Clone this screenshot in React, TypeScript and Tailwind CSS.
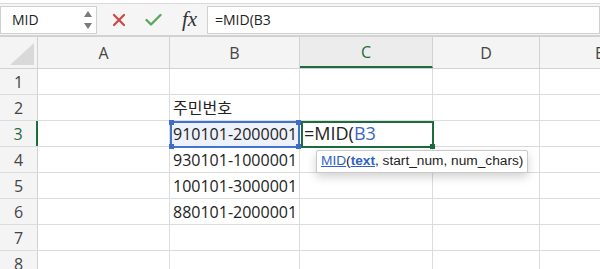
import React from 'react';

const cols = [
  { key: 'A', w: 'w-[132px]' },
  { key: 'B', w: 'w-[130px]' },
  { key: 'C', w: 'w-[133px]' },
  { key: 'D', w: 'w-[107px]' },
  { key: 'E', w: 'w-[120px]' },
];

const data: Record<number, string> = {
  2: '주민번호',
  3: '910101-2000001',
  4: '930101-1000001',
  5: '100101-3000001',
  6: '880101-2000001',
};

function Handle({ className }: { className: string }) {
  return <div className={`absolute w-[5px] h-[5px] bg-[#3f6cc8] ${className}`} />;
}

export default function App() {
  const rows = [1, 2, 3, 4, 5, 6, 7, 8];

  return (
    <div className="relative w-[600px] h-[269px] overflow-hidden bg-white text-[#222] font-['Open_Sans','Noto_Sans_CJK_KR',sans-serif]">
      {/* formula bar */}
      <div className="h-[3px] bg-white" />
      <div className="flex items-center h-[34px] bg-[#f5f5f5] border-t border-[#dadada] border-b-2 border-b-[#d2d2d2]">
        <div className="flex items-center justify-between w-[97px] h-[28px] bg-white border border-[#cfcfcf] pl-[11px] pr-[3px]">
          <span className="text-[14px]">MID</span>
          <svg width="10" height="22" viewBox="0 0 10 22">
            <polygon points="5,2 9,8 1,8" fill="#7a7a7a" />
            <polygon points="5,20 9,14 1,14" fill="#7a7a7a" />
          </svg>
        </div>
        <div className="flex items-center w-[110px] h-full">
          <svg className="ml-[15px]" width="14" height="14" viewBox="0 0 14 14">
            <path d="M2 2 L12 12 M12 2 L2 12" stroke="#d04545" strokeWidth="2.2" strokeLinecap="round" />
          </svg>
          <svg className="ml-[19px]" width="17" height="14" viewBox="0 0 17 14">
            <path d="M1.5 7 L6 11.5 L15.5 2" stroke="#5ba85b" strokeWidth="2.4" fill="none" strokeLinecap="round" strokeLinejoin="round" />
          </svg>
          <span className="ml-[20px] text-[21px] italic font-['Liberation_Serif',serif] text-[#333] leading-none">fx</span>
        </div>
        <div className="flex items-center flex-1 h-[28px] bg-white border border-[#cfcfcf] pl-[7px]">
          <span className="text-[14px]">=MID(B3</span>
        </div>
      </div>

      {/* column headers */}
      <div className="flex h-[32px] bg-[#f4f4f4] border-b border-[#d2d2d2]">
        <div className="relative w-[38px] shrink-0 border-r border-[#d2d2d2]">
          <svg className="absolute right-[3px] bottom-[3px]" width="24" height="22" viewBox="0 0 24 22">
            <polygon points="24,0 24,22 0,22" fill="#d9d9d9" />
          </svg>
        </div>
        {cols.map((c) => (
          <div
            key={c.key}
            className={`${c.w} shrink-0 flex items-center justify-center text-[16px] border-r border-[#d2d2d2] ${
              c.key === 'C' ? 'bg-[#ececec] text-[#1e6b3f] border-b-2 border-b-[#1e6b3f]' : 'text-[#444]'
            }`}
          >
            {c.key}
          </div>
        ))}
      </div>

      {/* rows */}
      {rows.map((r) => (
        <div key={r} className="flex h-[26px] border-b border-[#dcdcdc]">
          <div
            className={`w-[38px] shrink-0 flex items-center justify-center bg-[#f4f4f4] text-[16px] ${
              r === 3 ? 'text-[#1e6b3f] border-r-2 border-[#1e6b3f]' : 'text-[#444] border-r border-[#d2d2d2]'
            }`}
          >
            {r}
          </div>
          {cols.map((c) => (
            <div
              key={c.key}
              className={`${c.w} shrink-0 flex items-center pl-[3px] text-[16px] whitespace-nowrap border-r border-[#dcdcdc] ${
                c.key === 'B' && r === 3 ? 'bg-[#edf1fa]' : ''
              }`}
            >
              {c.key === 'B' && data[r]}
              {c.key === 'C' && r === 3 && (
                <span className="text-[18px] pl-[1px]">
                  =MID(<span className="text-[#3b66c4]">B3</span>
                </span>
              )}
            </div>
          ))}
        </div>
      ))}

      {/* B3 reference highlight */}
      <div className="absolute left-[170px] top-[121px] w-[130px] h-[27px] border-2 border-[#4272cf] pointer-events-none">
        <Handle className="-left-[3px] -top-[3px]" />
        <Handle className="-right-[3px] -top-[3px]" />
        <Handle className="-left-[3px] -bottom-[3px]" />
        <Handle className="-right-[3px] -bottom-[3px]" />
      </div>

      {/* C3 active cell */}
      <div className="absolute left-[301px] top-[121px] w-[133px] h-[27px] border-2 border-[#1e6b3f] pointer-events-none">
        <div className="absolute -right-[3px] -bottom-[3px] w-[5px] h-[5px] bg-[#1e6b3f]" />
      </div>

      {/* function tooltip */}
      <div className="absolute left-[316px] top-[150px] h-[23px] px-[4px] flex items-center bg-white border border-[#cacaca] rounded-[2px] shadow-[0_4px_10px_rgba(0,0,0,0.18)] text-[13.7px] font-['Liberation_Sans',sans-serif] text-[#222] whitespace-nowrap">
        <span className="text-[#2f62c8] underline">MID</span>(
        <span className="text-[#2f62c8] underline font-bold">text</span>, start_num, num_chars)
      </div>
    </div>
  );
}
